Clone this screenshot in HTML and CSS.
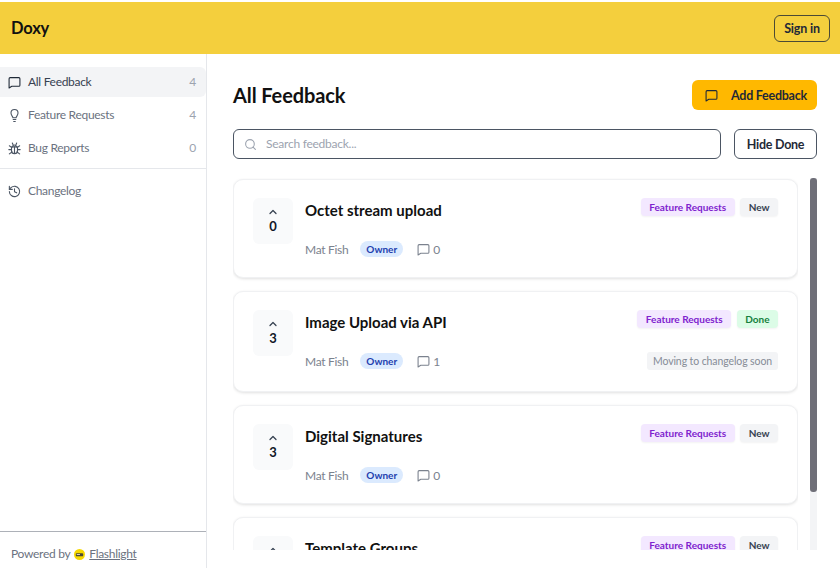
FILE: index.html
```html
<!DOCTYPE html>
<html lang="en">
<head>
    <meta charset="UTF-8">
    <meta name="viewport" content="width=device-width, initial-scale=1.0">
    <title>Doxy</title>
    <link rel="stylesheet" href="styles.css">
</head>
<body>
    <svg class="icon-defs" width="0" height="0">
        <symbol id="icon-chat" viewBox="0 0 24 24">
            <path d="M2 5a2 2 0 0 1 2-2h16a2 2 0 0 1 2 2v12a2 2 0 0 1-2 2H7l-5 3z" fill="none" stroke="currentColor" stroke-width="2" stroke-linejoin="round"/>
        </symbol>
    </svg>
    <header class="topbar">
        <div class="brand">Doxy</div>
        <button class="signin">Sign in</button>
    </header>
    <div class="layout">
        <aside class="sidebar">
            <nav class="nav">
                <a class="nav-item active">
                    <svg class="nav-icon"><use href="#icon-chat"/></svg>
                    <span class="nav-label">All Feedback</span>
                    <span class="nav-count">4</span>
                </a>
                <a class="nav-item">
                    <svg class="nav-icon" viewBox="0 0 24 24" fill="none" stroke="currentColor" stroke-width="2" stroke-linecap="round" stroke-linejoin="round">
                        <path d="M9 16c0-2.500-3.500-4-3.500-8.500a6.500 6.500 0 0 1 13 0C18.500 12 15 13.500 15 16z"/>
                        <path d="M9.500 19.500h5M10.500 23h3"/>
                    </svg>
                    <span class="nav-label">Feature Requests</span>
                    <span class="nav-count">4</span>
                </a>
                <a class="nav-item">
                    <svg class="nav-icon" viewBox="0 0 24 24" fill="none" stroke="currentColor" stroke-width="2" stroke-linecap="round" stroke-linejoin="round">
                        <path d="M6.500 9h11v7a5.500 5.500 0 0 1-11 0z"/>
                        <path d="M8.500 9a3.500 3.500 0 0 1 7 0"/>
                        <path d="M12 9v12"/>
                        <path d="M6.500 14H1.500M22.500 14h-5M2.500 7l4 3M21.500 7l-4 3M2.500 22l5-3.500M21.500 22l-5-3.500M8 2l1.500 3.500M16 2l-1.500 3.500"/>
                    </svg>
                    <span class="nav-label">Bug Reports</span>
                    <span class="nav-count">0</span>
                </a>
            </nav>
            <div class="nav nav-second">
                <a class="nav-item">
                    <svg class="nav-icon" viewBox="0 0 24 24" fill="none" stroke="currentColor" stroke-width="2" stroke-linecap="round" stroke-linejoin="round">
                        <path d="M2.500 12a9.500 9.500 0 1 0 3-7L2.500 8"/>
                        <path d="M2.500 2.500V8H8"/>
                        <path d="M12 7v5.500l4 2"/>
                    </svg>
                    <span class="nav-label">Changelog</span>
                </a>
            </div>
            <div class="powered">
                Powered by
                <svg class="flash-logo" viewBox="0 0 12 12">
                    <circle cx="6" cy="6" r="6" fill="#f5d800"/>
                    <rect x="2" y="4.500" width="8" height="3.500" rx="1" fill="#4a4a3a"/>
                    <rect x="3" y="5.500" width="3.500" height="1" fill="#e8e4c0"/>
                </svg>
                <a class="powered-link">Flashlight</a>
            </div>
        </aside>
        <main class="main">
            <div class="page-head">
                <h1>All Feedback</h1>
                <button class="add-btn">
                    <svg class="add-icon"><use href="#icon-chat"/></svg>
                    Add Feedback
                </button>
            </div>
            <div class="search-row">
                <label class="search">
                    <svg class="search-icon" viewBox="0 0 24 24" fill="none" stroke="currentColor" stroke-width="2" stroke-linecap="round">
                        <circle cx="11" cy="11" r="8"/>
                        <path d="M21 21l-4.300-4.300"/>
                    </svg>
                    <input type="text" placeholder="Search feedback...">
                </label>
                <button class="hide-btn">Hide Done</button>
            </div>
            <div class="list-wrap">
                <div class="list">
                    <article class="card">
                        <div class="vote">
                            <svg class="chevron" viewBox="0 0 24 24" fill="none" stroke="currentColor" stroke-width="2.500" stroke-linecap="round" stroke-linejoin="round"><path d="M6 15l6-6 6 6"/></svg>
                            <span>0</span>
                        </div>
                        <div class="card-body">
                            <div class="card-top">
                                <h2>Octet stream upload</h2>
                                <div class="tags">
                                    <span class="tag tag-purple">Feature Requests</span>
                                    <span class="tag tag-grey">New</span>
                                </div>
                            </div>
                            <div class="card-meta">
                                <span class="author">Mat Fish</span>
                                <span class="owner">Owner</span>
                                <span class="comments"><svg class="comment-icon"><use href="#icon-chat"/></svg>0</span>
                            </div>
                        </div>
                    </article>
                    <article class="card card-note">
                        <div class="vote">
                            <svg class="chevron" viewBox="0 0 24 24" fill="none" stroke="currentColor" stroke-width="2.500" stroke-linecap="round" stroke-linejoin="round"><path d="M6 15l6-6 6 6"/></svg>
                            <span>3</span>
                        </div>
                        <div class="card-body">
                            <div class="card-top">
                                <h2>Image Upload via API</h2>
                                <div class="tags">
                                    <span class="tag tag-purple">Feature Requests</span>
                                    <span class="tag tag-green">Done</span>
                                </div>
                            </div>
                            <div class="card-meta">
                                <span class="author">Mat Fish</span>
                                <span class="owner">Owner</span>
                                <span class="comments"><svg class="comment-icon"><use href="#icon-chat"/></svg>1</span>
                                <span class="note">Moving to changelog soon</span>
                            </div>
                        </div>
                    </article>
                    <article class="card">
                        <div class="vote">
                            <svg class="chevron" viewBox="0 0 24 24" fill="none" stroke="currentColor" stroke-width="2.500" stroke-linecap="round" stroke-linejoin="round"><path d="M6 15l6-6 6 6"/></svg>
                            <span>3</span>
                        </div>
                        <div class="card-body">
                            <div class="card-top">
                                <h2>Digital Signatures</h2>
                                <div class="tags">
                                    <span class="tag tag-purple">Feature Requests</span>
                                    <span class="tag tag-grey">New</span>
                                </div>
                            </div>
                            <div class="card-meta">
                                <span class="author">Mat Fish</span>
                                <span class="owner">Owner</span>
                                <span class="comments"><svg class="comment-icon"><use href="#icon-chat"/></svg>0</span>
                            </div>
                        </div>
                    </article>
                    <article class="card">
                        <div class="vote">
                            <svg class="chevron" viewBox="0 0 24 24" fill="none" stroke="currentColor" stroke-width="2.500" stroke-linecap="round" stroke-linejoin="round"><path d="M6 15l6-6 6 6"/></svg>
                            <span>2</span>
                        </div>
                        <div class="card-body">
                            <div class="card-top">
                                <h2>Template Groups</h2>
                                <div class="tags">
                                    <span class="tag tag-purple">Feature Requests</span>
                                    <span class="tag tag-grey">New</span>
                                </div>
                            </div>
                            <div class="card-meta">
                                <span class="author">Mat Fish</span>
                                <span class="owner">Owner</span>
                                <span class="comments"><svg class="comment-icon"><use href="#icon-chat"/></svg>0</span>
                            </div>
                        </div>
                    </article>
                </div>
                <div class="scrollbar"><div class="scrollbar-thumb"></div></div>
            </div>
        </main>
    </div>
</body>
</html>
```

FILE: styles.css
```css
* {
    box-sizing: border-box;
}
html, body {
    height: 100%;
}
body {
    font-family: Lato, "Open Sans", Arial, sans-serif;
    display: flex;
    flex-direction: column;
    margin: 0;
    padding-top: 2px;
    overflow: hidden;
    background-color: #fff;
    color: #111827;
}
button {
    font-family: inherit;
    cursor: pointer;
}
.icon-defs {
    position: absolute;
}
.topbar {
    display: flex;
    align-items: center;
    justify-content: space-between;
    flex: 0 0 52px;
    padding: 0 10px 0 11px;
    background-color: #f4cf3d;
}
.brand {
    font-size: 16.500px;
    font-weight: 700;
    letter-spacing: -0.2px;
    color: #111;
}
.signin {
    width: 56px;
    height: 27px;
    padding: 0;
    font-size: 12.500px;
    font-weight: 700;
    letter-spacing: -0.2px;
    color: #1f2937;
    background: transparent;
    border: 1px solid #4b4a35;
    border-radius: 6px;
}
.layout {
    display: flex;
    flex: 1;
    min-height: 0;
}
.sidebar {
    display: flex;
    flex-direction: column;
    flex: 0 0 207px;
    padding-top: 13px;
    border-right: 1px solid #e5e7eb;
}
.nav {
    display: flex;
    flex-direction: column;
    gap: 3px;
    padding-bottom: 5px;
    border-bottom: 1px solid #e5e7eb;
}
.nav-second {
    padding: 7px 0 0;
    border-bottom: 0;
}
.nav-item {
    display: flex;
    align-items: center;
    height: 30px;
    padding: 0 10px 0 8px;
    font-size: 12px;
    letter-spacing: -0.3px;
    color: #6b7280;
    border-radius: 0 6px 6px 0;
}
.nav-item.active {
    color: #374151;
    background-color: #f3f4f6;
}
.nav-icon {
    flex: 0 0 13px;
    width: 13px;
    height: 13px;
    margin-right: 7px;
    color: #4b5563;
}
.active .nav-icon {
    color: #1f2937;
}
.nav-label {
    flex: 1;
    padding-bottom: 2px;
}
.nav-count {
    padding-bottom: 2px;
    color: #9ca3af;
}
.powered {
    display: flex;
    align-items: center;
    height: 37px;
    margin-top: auto;
    padding: 7px 0 0 11px;
    font-size: 12px;
    letter-spacing: -0.3px;
    color: #6b7280;
    border-top: 1px solid #adb1b8;
}
.flash-logo {
    width: 11px;
    height: 11px;
    margin: 1px 4px 0;
}
.powered-link {
    text-decoration: underline;
}
.main {
    display: flex;
    flex-direction: column;
    flex: 1;
    min-width: 0;
    padding: 26px 23px 18px 26px;
}
.page-head {
    display: flex;
    align-items: center;
    justify-content: space-between;
    height: 30px;
}
h1 {
    margin: 0;
    padding-bottom: 1px;
    font-size: 20px;
    font-weight: 700;
    letter-spacing: -0.1px;
    color: #111;
}
.add-btn {
    display: flex;
    align-items: center;
    width: 125px;
    height: 30px;
    padding: 0 13px;
    font-size: 12.500px;
    font-weight: 700;
    letter-spacing: -0.25px;
    white-space: nowrap;
    color: #1f2937;
    background-color: #ffb800;
    border: 0;
    border-radius: 6px;
}
.add-icon {
    flex: 0 0 13px;
    width: 13px;
    height: 13px;
    margin-right: 13px;
}
.search-row {
    display: flex;
    gap: 13px;
    margin-top: 19px;
}
.search {
    display: flex;
    align-items: center;
    flex: 1;
    height: 30px;
    padding: 0 10px;
    border: 1px solid #4b5563;
    border-radius: 6px;
}
.search-icon {
    flex: 0 0 13px;
    width: 13px;
    height: 13px;
    margin-right: 9px;
    color: #9ca3af;
}
.search input {
    flex: 1;
    min-width: 0;
    padding: 0 0 2px;
    font-family: inherit;
    font-size: 12px;
    letter-spacing: -0.25px;
    border: 0;
    outline: 0;
}
.search input::placeholder {
    color: #9ca3af;
}
.hide-btn {
    width: 83px;
    height: 30px;
    padding: 0;
    font-size: 12.500px;
    font-weight: 700;
    letter-spacing: -0.25px;
    color: #1f2937;
    background: #fff;
    border: 1px solid #4b5563;
    border-radius: 6px;
}
.list-wrap {
    display: flex;
    gap: 12px;
    flex: 1;
    min-height: 0;
    margin-top: 19px;
}
.list {
    display: flex;
    flex-direction: column;
    gap: 13px;
    flex: 1;
    min-width: 0;
    padding: 1px 0;
    overflow: hidden;
}
.scrollbar {
    flex: 0 0 7px;
    background-color: #f3f4f6;
}
.scrollbar-thumb {
    height: 314px;
    background-color: #6f6f78;
    border-radius: 3px;
}
.card {
    display: flex;
    flex: 0 0 auto;
    gap: 12px;
    height: 99px;
    padding: 18px 19px;
    background: #fff;
    border: 1px solid #f0f1f3;
    border-radius: 10px;
    box-shadow: 0 1px 3px rgba(0,0,0,0.12);
}
.card-note {
    height: 101px;
}
.vote {
    display: flex;
    flex-direction: column;
    align-items: center;
    flex: 0 0 40px;
    height: 46px;
    padding-top: 8px;
    font-size: 13px;
    font-weight: 700;
    line-height: 16px;
    background-color: #f9fafb;
    border-radius: 6px;
}
.chevron {
    width: 12px;
    height: 12px;
    color: #374151;
}
.card-body {
    flex: 1;
    min-width: 0;
}
.card-top {
    display: flex;
    justify-content: space-between;
    align-items: flex-start;
}
h2 {
    margin: 0;
    font-size: 15px;
    font-weight: 700;
    line-height: 24px;
    color: #111;
}
.tags {
    display: flex;
    gap: 5.500px;
}
.tag {
    height: 18px;
    padding: 0 8.500px;
    font-size: 10px;
    font-weight: 700;
    line-height: 18px;
    border-radius: 4px;
    box-shadow: 0 1px 2px rgba(0,0,0,0.05);
}
.tag-purple {
    color: #7e22ce;
    background-color: #f3e8ff;
}
.tag-grey {
    color: #374151;
    background-color: #f3f4f6;
}
.tag-green {
    color: #15803d;
    background-color: #dcfce7;
}
.card-meta {
    display: flex;
    align-items: center;
    height: 18px;
    margin-top: 18px;
    font-size: 12px;
    letter-spacing: -0.3px;
    color: #7b828e;
}
.owner {
    height: 16px;
    margin-left: 12px;
    padding: 0 6px;
    font-size: 10px;
    font-weight: 700;
    letter-spacing: 0;
    line-height: 16px;
    color: #1e40af;
    background-color: #dbeafe;
    border-radius: 8px;
}
.comments {
    display: flex;
    align-items: center;
    margin-left: 14px;
}
.comment-icon {
    width: 13px;
    height: 13px;
    margin-right: 3px;
}
.note {
    margin-left: auto;
    padding: 3px 6px;
    font-size: 10.500px;
    letter-spacing: -0.1px;
    color: #868c97;
    background-color: #f3f4f6;
    border-radius: 3px;
}
```
